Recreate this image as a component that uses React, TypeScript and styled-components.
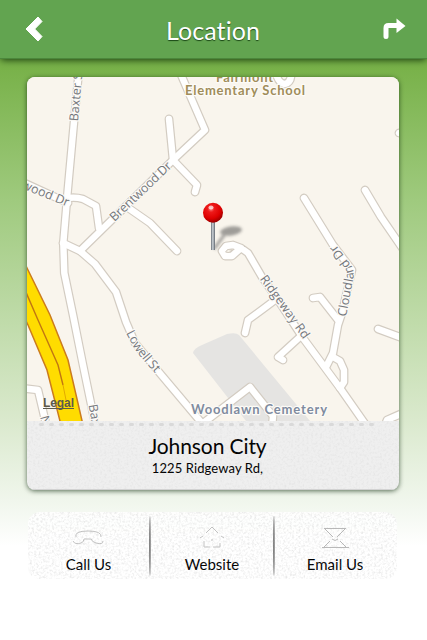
import styled, { createGlobalStyle } from 'styled-components';

const GlobalStyle = createGlobalStyle`
  * {
    box-sizing: border-box;
  }
  body {
    margin: 0;
    background: #fff;
    font-family: 'Lato', 'Liberation Sans', sans-serif;
  }
`;

const Page = styled.div`
  width: 427px;
  height: 640px;
  overflow: hidden;
  background: linear-gradient(#76b046 59px, #9fca7e 200px, #dae9cd 420px, #f0f6ec 500px, #fff 546px);
`;

const Header = styled.header`
  position: relative;
  display: flex;
  align-items: center;
  justify-content: space-between;
  height: 59px;
  padding: 0 21px 0 25px;
  background: #62a450;
  border-bottom: 1px solid #4c873c;
  box-shadow: 0 2px 7px -1px rgba(0, 30, 0, 0.8);
`;

const HeaderButton = styled.button`
  display: flex;
  padding: 0;
  border: 0;
  background: none;
`;

const Title = styled.h1`
  margin: 1px 0 0;
  color: #fff;
  font-size: 25px;
  font-weight: 400;
  line-height: 30px;
  letter-spacing: 0.1px;
  text-shadow: 0 1px 1px rgba(0, 40, 0, 0.75);
`;

const Card = styled.section`
  width: 372px;
  height: 413px;
  margin: 18px 0 0 27px;
  overflow: hidden;
  border-radius: 8px;
  background: #efefef;
  box-shadow: 0 1px 5px rgba(0, 30, 0, 0.65);
`;

const MapSvg = styled.svg`
  display: block;
`;

const Info = styled.div`
  position: relative;
  display: flex;
  flex-direction: column;
  align-items: center;
  height: 69px;
  padding: 11px 11px 0 0;
  border-bottom: 1px solid #d2d2d2;
`;

const City = styled.h2`
  margin: 0;
  font-size: 21px;
  font-weight: 400;
  line-height: 28px;
  letter-spacing: -0.1px;
`;

const Address = styled.p`
  margin: 0;
  font-size: 13px;
  line-height: 16px;
  letter-spacing: 0.1px;
`;

const Texture = styled.svg`
  position: absolute;
  inset: 0;
  width: 100%;
  height: 100%;
  pointer-events: none;
`;

const Actions = styled.nav`
  position: relative;
  display: flex;
  align-items: center;
  width: 369px;
  height: 67px;
  margin: 22px 0 0 28px;
  overflow: hidden;
  border-radius: 12px;
  background: rgba(255, 255, 255, 0.85);
`;

const Action = styled.button<{ $width: number }>`
  display: flex;
  flex: 0 0 ${({ $width }) => $width}px;
  flex-direction: column;
  align-items: center;
  gap: 4px;
  height: 67px;
  padding: 13px 0 0;
  border: 0;
  background: none;
  color: #000;
  font-family: inherit;
  font-size: 15px;
  line-height: 18px;
`;

const Divider = styled.span`
  width: 2px;
  height: 60px;
  border-radius: 50%;
  background: linear-gradient(90deg, #777, #a5a5a5);
`;

const roads = [
  'M79 70 L74 122 L67.5 193 L63.3 243 L64.3 273 L73 315 L83 365 L96 428',
  'M20 181 L68 203',
  'M68 198 Q76 197 83 199 L96 206 L99 228',
  'M179 70 L205 130 L173 160 L80 251',
  'M169 119 L173 160 L197 185 L195 192',
  'M63 243 L80 251 L95 264 L116 292 L126 322 L135 343 L158 371 L206 428',
  'M127 207 L150 223 L177 251',
  'M241 248 L233 245 L226 246 L222 251 L225 256 L232 256 L241 248 L248 253 L262 277 L280 303 L303 338 L340 388 L368 428',
  'M275 300 L263 309 L248 320 L245 333',
  'M301 336 L278 357 L283 360',
  'M304 198 L333 245 L352 270 L342 313 L338 325 L333 353 L326 367',
  'M313 298 L320 297 L338 320',
  'M333 357 L340 361 L344 370 L344 382 L340 388',
  'M365 190 L381 217 L405 252',
  'M378 329 L405 339',
  'M384 428 L387 420 L405 412',
  'M20 388 L38 390 L47 428',
  'M202 424 L250 387 L273 416 L272 428',
  'M275 70 Q278 84 285 84 Q292 82 291 72',
  'M399 133 L405 134',
];

const StreetMap = () => (
  <MapSvg width="373" height="344" viewBox="27 77 373 344">
    <defs>
      <radialGradient id="pinHead" cx="0.4" cy="0.3" r="0.7">
        <stop offset="0" stopColor="#ff8a8a" />
        <stop offset="0.25" stopColor="#ee1a1a" />
        <stop offset="0.7" stopColor="#dd0000" />
        <stop offset="1" stopColor="#9c0000" />
      </radialGradient>
      <linearGradient id="pinStem">
        <stop offset="0" stopColor="#666d75" />
        <stop offset="0.45" stopColor="#cdd3d8" />
        <stop offset="1" stopColor="#5f666e" />
      </linearGradient>
      <filter id="soft" x="-30%" y="-30%" width="160%" height="160%">
        <feGaussianBlur stdDeviation="1.6" />
      </filter>
      <path id="lowell" d="M126 333 L134 348 Q139 356 165 384" />
      <path id="cloudland" d="M346 317 L352.5 283 Q355 272 351 265 L331 238" />
    </defs>
    <rect x="27" y="77" width="373" height="344" fill="#f9f5ed" />
    <path d="M193 353 Q194 348 202 345 L227 334 Q236 332 239 335 L310 421 L246 421 Z" fill="#e5e4e2" />
    <path
      d="M20 254 L28 270 L50 315 L68 360 L83 425 L61 425 L47 370 L28 325 L20 309 Z"
      fill="#ffdc00"
      stroke="#cb7b1c"
      strokeWidth="1.5"
    />
    <path d="M25 290 L38 320 L58 365 L63 385" fill="none" stroke="#c17612" strokeWidth="1.4" />
    <path d="M63 385 L66 400" fill="none" stroke="#e2aa00" strokeWidth="1" />
    <g fill="none" strokeLinecap="round" strokeLinejoin="round">
      {roads.map((d) => (
        <path key={d} d={d} stroke="#d3ccc2" strokeWidth="8.8" />
      ))}
      {roads.map((d) => (
        <path key={d} d={d} stroke="#fff" strokeWidth="6.4" />
      ))}
    </g>
    <path d="M225.5 252 L228 249.5 L232 250 L229 252.5 Z" fill="#f9f5ed" stroke="#d3ccc2" />
    <g
      fill="#74777c"
      stroke="#fbf9f5"
      strokeWidth="2.4"
      strokeLinejoin="round"
      paintOrder="stroke"
      fontFamily="Open Sans, sans-serif"
      fontSize="12.5"
    >
      <text transform="translate(78 121.5) rotate(-85)" textLength="53">Baxter St</text>
      <text transform="translate(114.5 222) rotate(-43.5)" textLength="80">Brentwood Dr</text>
      <text transform="translate(21 188) rotate(22)" textLength="50">wood Dr</text>
      <text>
        <textPath href="#lowell" textLength="50">Lowell St</textPath>
      </text>
      <text transform="translate(259.5 279) rotate(54)" textLength="75">Ridgeway Rd</text>
      <text>
        <textPath href="#cloudland" textLength="79">Cloudland Dr</textPath>
      </text>
      <text transform="translate(88.5 405) rotate(80)">Baxter</text>
      <text transform="translate(40 417) rotate(75)">N</text>
    </g>
    <g
      fill="#a08d5a"
      stroke="#fdfbf7"
      strokeWidth="2.4"
      strokeLinejoin="round"
      paintOrder="stroke"
      fontFamily="Lato, sans-serif"
      fontWeight="700"
      fontSize="13"
    >
      <text x="216" y="82" textLength="57">Fairmont</text>
      <text x="185" y="95" textLength="120">Elementary School</text>
      <text x="191" y="414" fill="#7f8b9f" textLength="136">Woodlawn Cemetery</text>
    </g>
    <text x="43" y="407" fill="#5d5a4c" fontFamily="Liberation Sans, sans-serif" fontWeight="700" fontSize="12" textLength="31">
      Legal
    </text>
    <path d="M43 408.5 H74" stroke="#5d5a4c" />
    <g filter="url(#soft)" opacity="0.5">
      <ellipse cx="231" cy="231" rx="11" ry="4.5" fill="#444" transform="rotate(-8 231 231)" />
      <path d="M214 249 L225 234" stroke="#555" strokeWidth="3" />
    </g>
    <rect x="211" y="219" width="4" height="31" fill="url(#pinStem)" />
    <circle cx="213" cy="212.7" r="10" fill="url(#pinHead)" />
    <ellipse cx="211" cy="207.5" rx="2.5" ry="2" fill="#fff" opacity="0.65" />
  </MapSvg>
);

const Grain = ({ id, strength }: { id: string; strength: number }) => (
  <Texture>
    <filter id={id} x="0" y="0" width="100%" height="100%">
      <feTurbulence type="fractalNoise" baseFrequency="0.45" numOctaves="2" seed="4" />
      <feColorMatrix values={`0 0 0 0 0.4  0 0 0 0 0.4  0 0 0 0 0.4  ${strength} 0 0 0 ${-strength * 0.43}`} />
    </filter>
    <rect width="100%" height="100%" filter={`url(#${id})`} />
  </Texture>
);

const Perforation = () => (
  <Texture>
    <path d="M13.5 3.5 H346" stroke="#d9d9d9" strokeWidth="3" strokeLinecap="round" strokeDasharray="2 8" />
  </Texture>
);

const PhoneIcon = () => (
  <svg width="33" height="20" viewBox="0 0 33 20" fill="none" stroke="#c3c3c3">
    <path d="M4 9 Q2 3 16 3 Q30 3 29 9 M1 13 Q3 17 9 15 Q12 14 12 11 H19 Q20 14 24 15 Q31 17 31 13" />
  </svg>
);

const HomeIcon = () => (
  <svg width="26" height="26" viewBox="0 0 26 26" fill="none" stroke="#c3c3c3">
    <path d="M7 8 L13 2 L19 8 M1 13 L4 11 M22 11 L25 13 M5 16 V22 H11 M14 22 H21 V18 M12 15 H14" />
  </svg>
);

const MailIcon = () => (
  <svg width="28" height="22" viewBox="0 0 28 22" fill="none" stroke="#b9b9b9">
    <path d="M3 1.5 H25 M4 2 L12 10 M24 2 L16 10 M11 12 Q14 15 17 12 M9 14 L3 20 M19 14 L25 20 M1 20.5 H28" />
  </svg>
);

const IconSlot = styled.span`
  display: flex;
  align-items: center;
  height: 26px;
`;

const links = [
  { label: 'Call Us', icon: <PhoneIcon />, width: 121 },
  { label: 'Website', icon: <HomeIcon />, width: 122 },
  { label: 'Email Us', icon: <MailIcon />, width: 120 },
];

const App = () => {
  return (
    <Page>
      <GlobalStyle />
      <Header>
        <HeaderButton aria-label="Back">
          <svg width="18" height="26" viewBox="0 0 18 26">
            <path d="M1 13 L13 1 L17 5.5 L9.7 13 L17 20.5 L13 25 Z" fill="#fff" stroke="#fff" strokeLinejoin="round" />
          </svg>
        </HeaderButton>
        <Title>Location</Title>
        <HeaderButton aria-label="Directions">
          <svg width="23" height="22" viewBox="0 0 23 22">
            <path d="M3 18.5 V10 Q3 7.5 5.5 7.5 H15" fill="none" stroke="#fff" strokeWidth="5" strokeLinecap="round" />
            <path d="M13.5 0.5 L22.5 8 L13.5 15 Z" fill="#fff" />
          </svg>
        </HeaderButton>
      </Header>
      <Card>
        <StreetMap />
        <Info>
          <Grain id="cardGrain" strength={0.3} />
          <Perforation />
          <City>Johnson City</City>
          <Address>1225 Ridgeway Rd,</Address>
        </Info>
      </Card>
      <Actions>
        <Grain id="barGrain" strength={0.6} />
        {links.map(({ label, icon, width }, idx) => [
          idx > 0 && <Divider key={`${label}-divider`} />,
          <Action key={label} $width={width}>
            <IconSlot>{icon}</IconSlot>
            {label}
          </Action>,
        ])}
      </Actions>
    </Page>
  );
};

export default App;
